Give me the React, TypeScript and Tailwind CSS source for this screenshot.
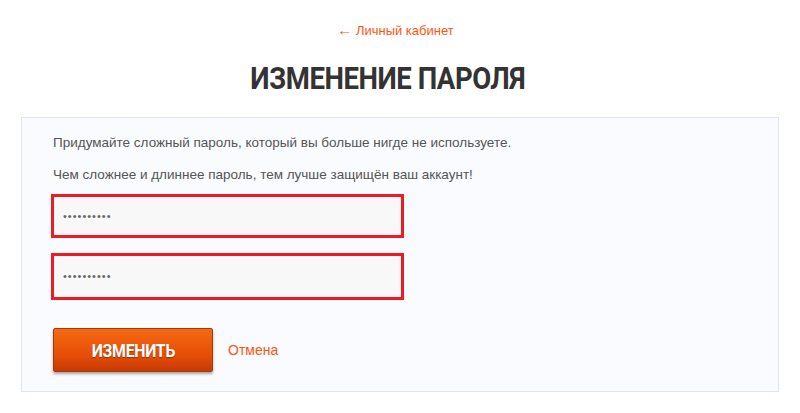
import React from "react";

export default function App() {
  return (
    <div className="w-[800px] h-[413px] bg-white overflow-hidden" style={{ fontFamily: "'Liberation Sans', Arial, sans-serif" }}>
      <div className="pt-[21px] flex justify-center pr-[9px]">
        <a className="text-[13px] leading-[18px] text-[#ff5511]"><span className="text-[15px]">←</span> Личный кабинет</a>
      </div>
      <h1 className="mt-[18px] text-center text-[#333] font-bold text-[32px] leading-[40px] pr-[25px]" style={{ fontFamily: "Roboto, 'Liberation Sans', sans-serif" }}>
        <span className="inline-block scale-x-[0.86] tracking-[-0.5px]">ИЗМЕНЕНИЕ ПАРОЛЯ</span>
      </h1>
      <div className="mx-[21px] mt-[19px] h-[275px] border border-[#dae6f6] bg-[#f9fbff] pl-[31px] pt-[16px]">
        <p className="text-[13.5px] leading-[18px] text-[#555]">Придумайте сложный пароль, который вы больше нигде не используете.</p>
        <p className="mt-[14px] text-[13.5px] leading-[18px] text-[#555]">Чем сложнее и длиннее пароль, тем лучше защищён ваш аккаунт!</p>
        <div className="mt-[10px] ml-[-2px] w-[353px] h-[44px] border-[3px] border-[#ed1c24] bg-[#f8f8f8] flex items-center pl-[9px]">
          <span className="text-[#666] text-[11px] tracking-[1px]">••••••••••</span>
        </div>
        <div className="mt-[15px] ml-[-2px] w-[353px] h-[47px] border-[3px] border-[#ed1c24] bg-[#f8f8f8] flex items-center pl-[9px]">
          <span className="text-[#666] text-[11px] tracking-[1px]">••••••••••</span>
        </div>
        <div className="mt-[28px] flex items-center">
          <button
            className="w-[160px] h-[44px] rounded-[2px] border border-[#a83a06] text-white font-bold text-[18px] flex items-center justify-center shadow-[0_2px_3px_rgba(0,0,0,0.35)]"
            style={{
              fontFamily: "Roboto, 'Liberation Sans', sans-serif",
              background: "linear-gradient(180deg, #f26a14 0%, #ee5c0c 30%, #e54c06 65%, #c63a04 100%)",
              textShadow: "0 1px 1px rgba(0,0,0,0.35)",
            }}
          >
            <span className="inline-block scale-x-[0.88] tracking-[-0.3px]">ИЗМЕНИТЬ</span>
          </button>
          <a className="ml-[15px] text-[14px] text-[#ff5511]">Отмена</a>
        </div>
      </div>
    </div>
  );
}
